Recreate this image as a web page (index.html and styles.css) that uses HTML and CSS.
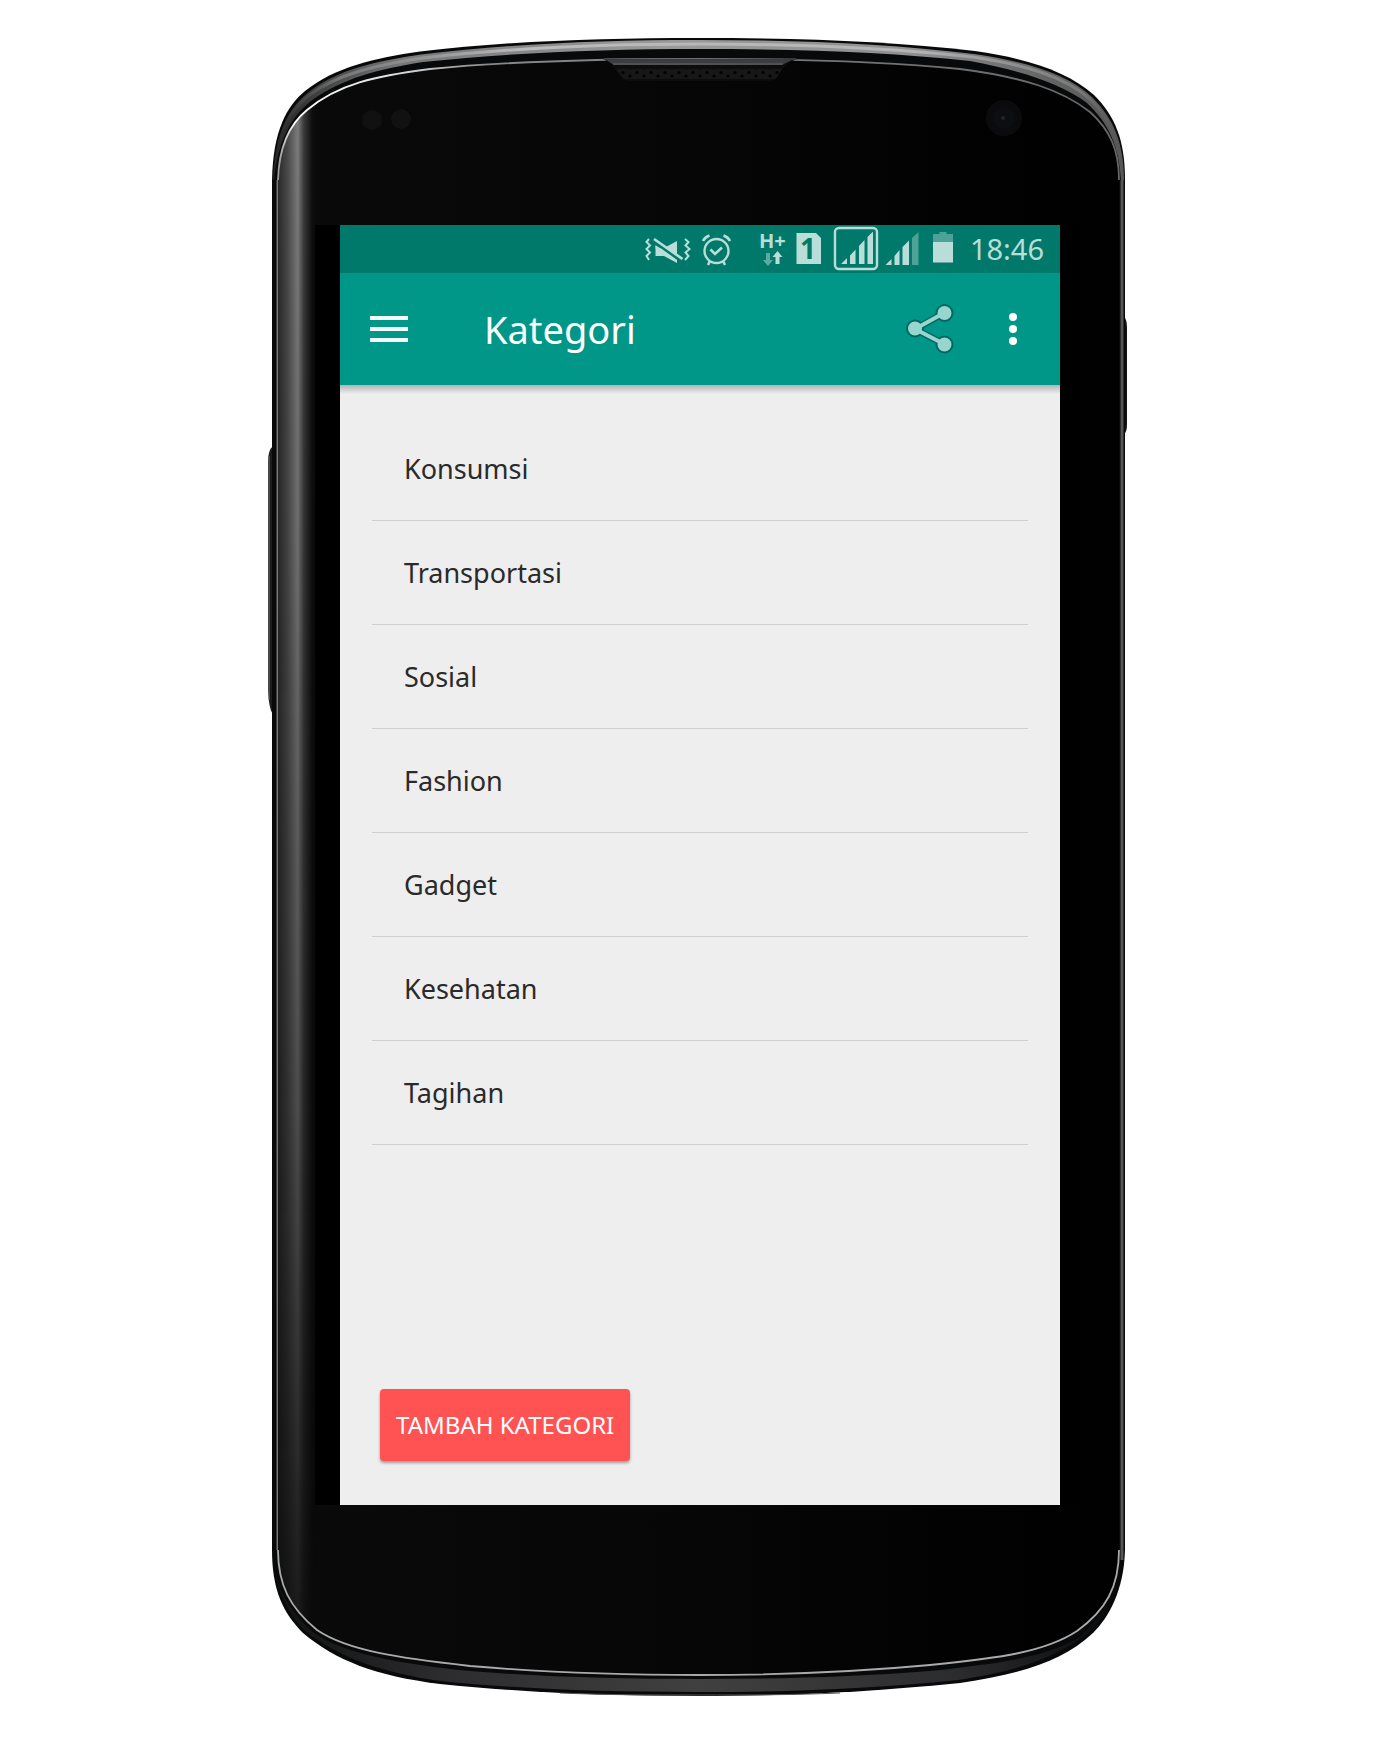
FILE: index.html
```html
<!DOCTYPE html>
<html lang="id">
<head>
<meta charset="utf-8">
<meta name="viewport" content="width=device-width, initial-scale=1">
<title>Kategori</title>
<link rel="stylesheet" href="styles.css">
</head>
<body>
<div class="phone">
  <svg class="phone-body" viewBox="270 38 860 1658" preserveAspectRatio="none" aria-hidden="true">
    <defs>
      <linearGradient id="face" x1="0" x2="1"><stop offset="0" stop-color="#0a0a0a"/><stop offset=".5" stop-color="#060606"/><stop offset="1" stop-color="#000"/></linearGradient>
      <linearGradient id="shine" gradientUnits="userSpaceOnUse" x1="278" y1="0" x2="316" y2="0"><stop offset="0" stop-color="#2a2a2a"/><stop offset=".25" stop-color="#4a4a4a"/><stop offset=".52" stop-color="#7c7c7c"/><stop offset=".68" stop-color="#3a3a3a"/><stop offset=".9" stop-color="#0e0e0e"/><stop offset="1" stop-color="#0a0a0a"/></linearGradient>
      <linearGradient id="fade" x1="0" x2="0" y1="0" y2="1"><stop offset="0" stop-color="#fff"/><stop offset=".3" stop-color="#ddd"/><stop offset=".65" stop-color="#999"/><stop offset="1" stop-color="#222"/></linearGradient>
      <mask id="shineMask"><rect x="270" y="100" width="50" height="1540" fill="url(#fade)"/></mask>
      <clipPath id="faceClip"><path d="M278 180C279 143 291 123 307 110C338 84 375 76 430 69C510 61 600 59 699 59C798 59 880 61 960 69C1023 77 1062 90 1090 112C1110 130 1119 150 1119 180V1550C1119 1587 1106 1610 1077 1631C1045 1652 1000 1658 930 1665C855 1672 780 1675 699 1675C620 1675 540 1672 470 1666C400 1658 348 1651 317 1630C290 1608 278 1585 278 1550Z"/></clipPath>
      <linearGradient id="topRim" gradientUnits="userSpaceOnUse" x1="272" y1="0" x2="1126" y2="0"><stop offset="0" stop-color="#222"/><stop offset=".06" stop-color="#444"/><stop offset=".15" stop-color="#777"/><stop offset=".45" stop-color="#999"/><stop offset=".75" stop-color="#909090"/><stop offset=".9" stop-color="#666"/><stop offset="1" stop-color="#555"/></linearGradient>
      <linearGradient id="topGlow" gradientUnits="userSpaceOnUse" x1="272" y1="0" x2="1126" y2="0"><stop offset="0" stop-color="#444" stop-opacity="0"/><stop offset=".08" stop-color="#777"/><stop offset=".3" stop-color="#bbb"/><stop offset=".75" stop-color="#b5b5b5"/><stop offset=".95" stop-color="#777"/><stop offset="1" stop-color="#555" stop-opacity="0"/></linearGradient>
      <linearGradient id="topLine" gradientUnits="userSpaceOnUse" x1="278" y1="0" x2="1120" y2="0"><stop offset="0" stop-color="#999"/><stop offset=".02" stop-color="#fff"/><stop offset=".14" stop-color="#ddd"/><stop offset=".25" stop-color="#888"/><stop offset=".6" stop-color="#777"/><stop offset="1" stop-color="#666"/></linearGradient>
      <linearGradient id="bottomRim" gradientUnits="userSpaceOnUse" x1="272" y1="0" x2="1126" y2="0"><stop offset="0" stop-color="#101010"/><stop offset=".2" stop-color="#2c2c2e"/><stop offset=".5" stop-color="#404040"/><stop offset=".8" stop-color="#2c2c2e"/><stop offset="1" stop-color="#080808"/></linearGradient>
      <pattern id="mesh" width="14" height="8" patternUnits="userSpaceOnUse" x="620" y="70"><rect width="14" height="8" fill="#171717"/><circle cx="3" cy="2.500" r="1.600" fill="#000"/><circle cx="10" cy="6" r="1.600" fill="#000"/></pattern>
    </defs>
    <path d="M273 446Q268 450 268 462V690Q269 710 273 714Z" fill="#1c1c1c"/>
    <path d="M269 456V700" stroke="#777" fill="none"/>
    <path d="M1124 316Q1127 320 1127 328V424Q1127 432 1124 434Z" fill="#111"/>
    <path fill="#08090a" d="M272 180C273 130 287 106 305 91C335 67 375 58 420 51.500C510 41 600 38 699 38C798 38 890 41 975 51C1030 59 1068 72 1094 95C1115 116 1125 140 1125 180V1550C1124 1590 1109 1617 1093 1633C1062 1662 1020 1674 960 1683C870 1692 790 1696 699 1696C600 1696 520 1692 440 1684C375 1676 335 1660 303 1633C283 1613 272 1590 272 1550Z"/>
    <path fill="url(#topRim)" d="M273 180C275 132 289 108 307 93.500C337 69 377 61 421 54.500C510 44 600 40 699 40C798 40 889 44 974 54C1029 62 1067 74 1092 97C1113 118 1124 142 1124 180H1121C1119 146 1109 124 1087 103C1060 83 1022 71 970 61C888 52 798 49 699 49C600 49 510 53 423 62C380 69 342 78 311 101C292 116 279 138 274 180Z"/>
    <path fill="none" stroke="url(#topGlow)" stroke-width="3" d="M275 160C280 130 290 111 308 96C338 73 378 65 422 58C510 48 600 44 699 44C798 44 888 48 973 57C1027 65 1065 77 1090 99C1111 119 1120 142 1122 180"/>
    <path fill="url(#bottomRim)" d="M273 1560C277 1592 288 1614 305 1631C340 1658 380 1672 440 1681C520 1689 600 1692 699 1692C790 1692 870 1689 958 1680C1017 1671 1058 1658 1090 1631C1106 1614 1119 1592 1123 1560C1117 1592 1104 1614 1080 1637C1045 1658 1000 1663 930 1671C855 1677 780 1679 699 1679C620 1679 540 1677 470 1671C400 1664 345 1654 314 1633C291 1612 278 1592 273 1560Z"/>
    <g fill="none">
      <path d="M560 1693C610 1695 650 1695 699 1695C750 1695 790 1695 840 1693" stroke="#555"/>
      <path d="M1122 180V1560" stroke="#555" stroke-width="3"/>
      <path d="M277.500 180V1550" stroke="#777" stroke-width="2"/>
    </g>
    <g clip-path="url(#faceClip)">
      <rect x="276" y="56" width="845" height="1622" fill="url(#face)"/>
      <rect x="278" y="100" width="38" height="1540" fill="url(#shine)" mask="url(#shineMask)"/>
    </g>
    <g fill="none">
      <path d="M278 180C279 143 291 123 307 110C338 84 375 76 430 69C510 61 600 59 699 59C798 59 880 61 960 69C1023 77 1062 90 1090 112C1110 130 1119 150 1119 180" stroke="url(#topLine)" stroke-width="1.800"/>
      <path d="M278 1550C278 1585 290 1608 317 1630C348 1651 400 1658 470 1666C540 1672 620 1675 699 1675C780 1675 855 1672 930 1665C1000 1658 1045 1652 1077 1631C1106 1610 1119 1587 1119 1550" stroke="#aaa" stroke-width="1.800"/>
    </g>
    <path d="M603 59H797Q786 62 778 75Q775 81 768 81H630Q623 81 619 75Q611 62 603 59Z" fill="#0c0c0c"/>
    <path d="M606 60H792L782 65H614Z" fill="#3c3d40"/>
    <path d="M604 59H796M613 64H783" stroke="#666"/>
    <path d="M616 69H782L776 79H624Z" fill="url(#mesh)"/>
    <circle cx="372" cy="120" r="10" fill="#111"/><circle cx="401" cy="119" r="10" fill="#111"/>
    <circle cx="1004" cy="118" r="18" fill="#0b0b0d"/><circle cx="1004" cy="118" r="11" fill="#0d0e12"/><circle cx="1003" cy="118" r="2" fill="#22252c"/>
    <path d="M315 225H1084V1505H315Z" fill="#000"/>
  </svg>

  <main class="screen">
    <div class="status-bar">
      <svg width="50" height="48" viewBox="642 225 50 48" role="img" aria-label="Senyap">
        <path d="M654.500 245L676 262.500V241L662 248.500H654.500Z" fill="#b9ddd8"/><path d="M654.500 246V256H663L676 263V255Z" fill="#b9ddd8"/>
        <path d="M651 240L683 263" stroke="#00796b" stroke-width="3"/><path d="M653 239L681.500 259" stroke="#b9ddd8" stroke-width="2.600"/>
        <path d="M648 239L645.500 242L649 245.500L645.500 249L649 252.500L645.500 256L648 260M684 239L687.500 242L684.500 245.500L688.500 249L684.500 252.500L687.500 256L684 260" fill="none" stroke="#b9ddd8" stroke-width="2"/>
      </svg>
      <svg width="48" height="48" viewBox="700 225 48 48" role="img" aria-label="Alarm" fill="none" stroke="#b9ddd8">
        <circle cx="715.500" cy="251" r="12" stroke-width="2.400"/><path d="M709.500 249.500L714 254L721 247.500" stroke-width="2.600"/><path d="M702 241Q704 237 708.500 235.500M729 241Q727 237 722.500 235.500M709 261L707 265M722 261L724 265" stroke-width="2.600"/>
      </svg>
      <svg width="31" height="48" viewBox="756 225 31 48" role="img" aria-label="Data seluler H+">
        <text x="758" y="248" class="network-label">H+</text>
        <path d="M765 253H769V260H772L767 266L762 260H765Z" fill="#5caba2"/><path d="M776.500 251L781.500 257H778.500V264H774.500V257H771.500Z" fill="#b9ddd8"/>
      </svg>
      <svg width="28" height="48" viewBox="795 225 28 48" role="img" aria-label="SIM 1">
        <path d="M795.500 233H815L820 238V264H795.500Z" fill="#b9ddd8"/><text x="799" y="259" class="sim-label">1</text>
      </svg>
      <svg class="signal-boxed" width="45" height="48" viewBox="831 225 45 48" role="img" aria-label="Sinyal SIM 1 penuh">
        <rect x="834" y="228" width="42" height="41" rx="4" fill="none" stroke="#b9ddd8" stroke-width="2.400"/>
        <path d="M840 264L846 258V264ZM849 255.500L854.500 249.500V264H849ZM858 246L863.500 240V264H858ZM866.500 237L872 231.500V264H866.500Z" fill="#b9ddd8"/>
      </svg>
      <svg width="37" height="48" viewBox="884 225 37 48" role="img" aria-label="Sinyal SIM 2">
        <path d="M884.500 265L890.500 259V265ZM893.500 256L898.500 250V265H893.500ZM901.500 247L908 240.500V265H901.500Z" fill="#b9ddd8"/><path d="M911 238L917.500 232V265H911Z" fill="#4da197"/>
      </svg>
      <svg width="32" height="48" viewBox="929 225 32 48" role="img" aria-label="Baterai">
        <path d="M932 234H938.500V232H945.500V234H952V243H932Z" fill="#4da197"/><path d="M932 242H952V262.500H932Z" fill="#b9ddd8"/>
      </svg>
      <time class="clock">18:46</time>
    </div>

    <header class="app-bar">
      <button class="icon-button menu-button" type="button" aria-label="Menu">
        <svg width="38" height="28" viewBox="0 0 38 28" fill="#f4fbfa"><path d="M0 1H38V5H0ZM0 12H38V16H0ZM0 23H38V27H0Z"/></svg>
      </button>
      <h1 class="title">Kategori</h1>
      <button class="icon-button" type="button" aria-label="Bagikan">
        <svg width="48" height="50" viewBox="905 304 48 50"><g stroke="#00695f"><path d="M914 329L943 313M914 329L943 344" stroke-width="7"/><g stroke-width="2" fill="#99d5cf"><circle cx="914" cy="328.500" r="8"/><circle cx="943.500" cy="313" r="8"/><circle cx="943.500" cy="344.500" r="8"/></g><path d="M914 329L943 313M914 329L943 344" stroke="#99d5cf" stroke-width="4"/></g></svg>
      </button>
      <button class="icon-button more-button" type="button" aria-label="Opsi lainnya">
        <svg width="8" height="32" viewBox="0 0 8 32" fill="#fff"><circle cx="4" cy="4" r="4"/><circle cx="4" cy="16" r="4"/><circle cx="4" cy="28" r="4"/></svg>
      </button>
    </header>

    <ul class="categories">
      <li>Konsumsi</li>
      <li>Transportasi</li>
      <li>Sosial</li>
      <li>Fashion</li>
      <li>Gadget</li>
      <li>Kesehatan</li>
      <li>Tagihan</li>
    </ul>

    <footer class="actions">
      <button class="add-button" type="button">TAMBAH KATEGORI</button>
    </footer>
  </main>
</div>
</body>
</html>
```
FILE: styles.css
```css
* { box-sizing: border-box; }

body {
  margin: 0;
  padding: 38px 0 44px 1px;
  background: #fff;
  font-family: "Noto Sans", sans-serif;
}

.phone {
  position: relative;
  width: 100%;
  max-width: 860px;
  margin: 0 auto;
  padding: 187px 70px 191px;
}

.phone-body {
  position: absolute;
  inset: 0;
  width: 100%;
  height: 100%;
  overflow: visible;
}

.screen {
  position: relative;
  display: flex;
  flex-direction: column;
  min-height: 1280px;
  background: #eee;
  color: #2a2a2a;
  overflow: hidden;
}

.status-bar {
  display: flex;
  align-items: center;
  justify-content: flex-end;
  gap: 8px;
  height: 48px;
  padding-right: 16px;
  background: #00796b;
}

.status-bar svg { flex: none; }
.signal-boxed { overflow: visible; }

.network-label {
  font: 700 20px "Noto Sans", sans-serif;
  fill: #b9ddd8;
}

.sim-label {
  font: 700 28px "Noto Sans", sans-serif;
  fill: #00796b;
}

.clock {
  color: #b9ddd8;
  font-size: 29px;
  line-height: 48px;
}

.app-bar {
  position: relative;
  display: flex;
  align-items: center;
  height: 112px;
  padding: 0 43px 0 30px;
  background: #009688;
}

.app-bar::after {
  position: absolute;
  top: 100%;
  left: 0;
  right: 0;
  height: 9px;
  background: linear-gradient(rgba(0, 0, 0, .25), rgba(0, 0, 0, 0));
  content: "";
}

.icon-button {
  display: flex;
  padding: 0;
  border: 0;
  background: none;
}

.title {
  flex: 1;
  margin: 0 0 0 76px;
  color: #fff;
  font-size: 38px;
  font-weight: 400;
  line-height: 48px;
}

.more-button { margin-left: 55px; }

.categories {
  flex: 1;
  margin: 0;
  padding: 32px;
  list-style: none;
}

.categories li {
  height: 104px;
  padding: 0 32px;
  border-bottom: 1px solid #cfcfcf;
  font-size: 27px;
  line-height: 104px;
}

.actions { padding: 0 40px 44px; }

.add-button {
  display: block;
  height: 72px;
  padding: 0 16px;
  border: 0;
  border-radius: 4px;
  background: #ff5252;
  box-shadow: 0 2px 3px rgba(0, 0, 0, .35);
  color: #fff;
  font: 400 24px/72px "Noto Sans", sans-serif;
}
```
